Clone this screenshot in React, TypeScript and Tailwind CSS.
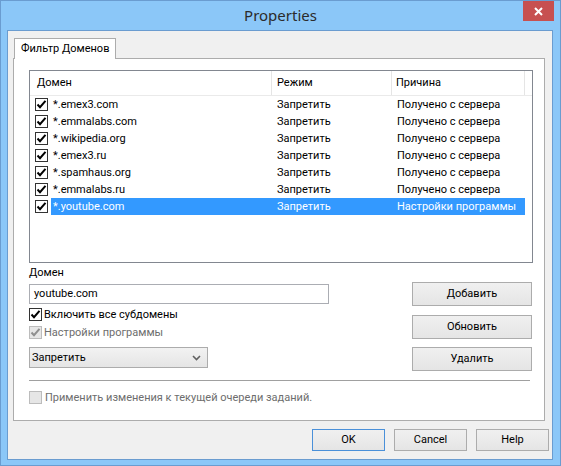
import React from "react";

const rows = [
  { domain: "*.emex3.com", mode: "Запретить", reason: "Получено с сервера" },
  { domain: "*.emmalabs.com", mode: "Запретить", reason: "Получено с сервера" },
  { domain: "*.wikipedia.org", mode: "Запретить", reason: "Получено с сервера" },
  { domain: "*.emex3.ru", mode: "Запретить", reason: "Получено с сервера" },
  { domain: "*.spamhaus.org", mode: "Запретить", reason: "Получено с сервера" },
  { domain: "*.emmalabs.ru", mode: "Запретить", reason: "Получено с сервера" },
  { domain: "*.youtube.com", mode: "Запретить", reason: "Настройки программы", selected: true },
];

function CheckBox({ checked = true, disabled = false }: { checked?: boolean; disabled?: boolean }) {
  return (
    <div
      className={
        disabled
          ? "w-[13px] h-[13px] shrink-0 border border-[#bcbcbc] bg-[#e6e6e6] flex items-center justify-center"
          : "w-[13px] h-[13px] shrink-0 border border-[#333333] bg-white flex items-center justify-center"
      }
    >
      {checked && (
        <svg width="11" height="11" viewBox="0 0 11 11">
          <path
            d="M1.5 5.5 L4 8.2 L9.5 1.8"
            fill="none"
            stroke={disabled ? "#8f8f8f" : "#000"}
            strokeWidth="2"
          />
        </svg>
      )}
    </div>
  );
}

function Button({ label, className = "" }: { label: string; className?: string }) {
  return (
    <div
      className={
        "flex items-center justify-center border bg-gradient-to-b from-[#f0f0f0] to-[#e5e5e5] text-black " +
        className
      }
    >
      {label}
    </div>
  );
}

export default function App() {
  return (
    <div className="w-[561px] h-[466px] border border-[#6a9cd0] bg-[#8bc7f8] flex flex-col font-['Roboto',sans-serif] text-[11px] leading-[16px] text-black overflow-hidden whitespace-nowrap">
      {/* title bar */}
      <div className="h-[29px] grid grid-cols-[1fr_auto_1fr] shrink-0">
        <div />
        <div className="text-[15px] leading-[29px] text-[#2b2b2b] font-['Noto_Sans',sans-serif]">Properties</div>
        <div className="flex justify-end pr-[6px]">
          <div className="w-[31px] h-[20px] bg-[#c75050] flex items-center justify-center">
            <svg width="9" height="9" viewBox="0 0 9 9">
              <path d="M1 1 L8 8 M8 1 L1 8" stroke="#fff" strokeWidth="2" />
            </svg>
          </div>
        </div>
      </div>

      {/* client */}
      <div className="flex-1 pl-[6px] pr-[7px] pb-[5px] flex">
        <div className="flex-1 border border-[#6a9cd0] bg-[#f0f0f0] flex flex-col">
          <div className="pl-[5px] pt-[7px] flex flex-col">
            {/* tab */}
            <div className="ml-[1px] w-[102px] h-[21px] -mb-px relative z-10 bg-white border border-b-0 border-[#acacac] pl-[6px] leading-[20px]">
              Фильтр Доменов
            </div>
            {/* panel */}
            <div className="w-[532px] h-[363px] bg-white border border-[#acacac] flex flex-col">
              {/* list */}
              <div className="ml-[15px] mt-[11px] w-[504px] h-[193px] border border-[#828790] bg-white flex flex-col">
                <div className="h-[25px] flex border-b border-[#eaeaea] shrink-0">
                  <div className="w-[242px] pl-[7px] border-r border-[#e5e5e5] flex items-center">Домен</div>
                  <div className="w-[120px] pl-[5px] border-r border-[#e5e5e5] flex items-center">Режим</div>
                  <div className="w-[133px] pl-[4px] border-r border-[#e5e5e5] flex items-center">Причина</div>
                  <div className="flex-1" />
                </div>
                {rows.map((r) => (
                  <div key={r.domain} className="h-[17px] flex items-center pl-[5px]">
                    <CheckBox />
                    <div
                      className={
                        "ml-[3px] w-[474px] h-[17px] flex items-center " +
                        (r.selected ? "bg-[#3399ff] text-white" : "")
                      }
                    >
                      <div className="w-[221px] pl-[2px]">{r.domain}</div>
                      <div className="w-[120px] pl-[5px]">{r.mode}</div>
                      <div className="flex-1 pl-[5px]">{r.reason}</div>
                    </div>
                  </div>
                ))}
              </div>

              {/* form */}
              <div className="flex">
                <div className="ml-[15px] w-[300px] flex flex-col">
                  <div className="mt-[2px]">Домен</div>
                  <div className="mt-[3px] h-[20px] border border-[#abadb3] bg-white flex items-center pl-[4px]">
                    youtube.com
                  </div>
                  <div className="mt-[2px] h-[17px] flex items-center">
                    <CheckBox />
                    <span className="ml-[2px]">Включить все субдомены</span>
                  </div>
                  <div className="mt-[1px] h-[17px] flex items-center">
                    <CheckBox disabled />
                    <span className="ml-[2px] text-[#6d6d6d]">Настройки программы</span>
                  </div>
                  <div className="mt-[6px] w-[179px] h-[21px] border border-[#acacac] bg-gradient-to-b from-[#f2f2f2] to-[#e5e5e5] flex items-center">
                    <span className="flex-1 pl-[2px]">Запретить</span>
                    <svg width="17" height="10" viewBox="0 0 17 10" className="mr-[2px]">
                      <path d="M5 3 L8.5 6.5 L12 3" fill="none" stroke="#606060" strokeWidth="1.6" />
                    </svg>
                  </div>
                </div>
                <div className="ml-auto mr-[12px] w-[120px] flex flex-col">
                  <Button label="Добавить" className="mt-[19px] h-[24px] border-[#acacac]" />
                  <Button label="Обновить" className="mt-[9px] h-[24px] border-[#acacac]" />
                  <Button label="Удалить" className="mt-[8px] h-[24px] border-[#acacac]" />
                </div>
              </div>

              <div className="mt-[9px] ml-[15px] mr-[14px] h-px bg-[#a0a0a0]" />

              <div className="mt-[8px] ml-[15px] h-[17px] flex items-center">
                <CheckBox checked={false} disabled />
                <span className="ml-[3px] text-[#6d6d6d]">Применить изменения к текущей очереди заданий.</span>
              </div>
            </div>
          </div>

          {/* bottom buttons */}
          <div className="mt-[8px] flex justify-end gap-[9px] pr-[3px]">
            <Button label="OK" className="w-[73px] h-[22px] border-[#4a90d9]" />
            <Button label="Cancel" className="w-[73px] h-[22px] border-[#acacac]" />
            <Button label="Help" className="w-[73px] h-[22px] border-[#acacac]" />
          </div>
        </div>
      </div>
    </div>
  );
}
